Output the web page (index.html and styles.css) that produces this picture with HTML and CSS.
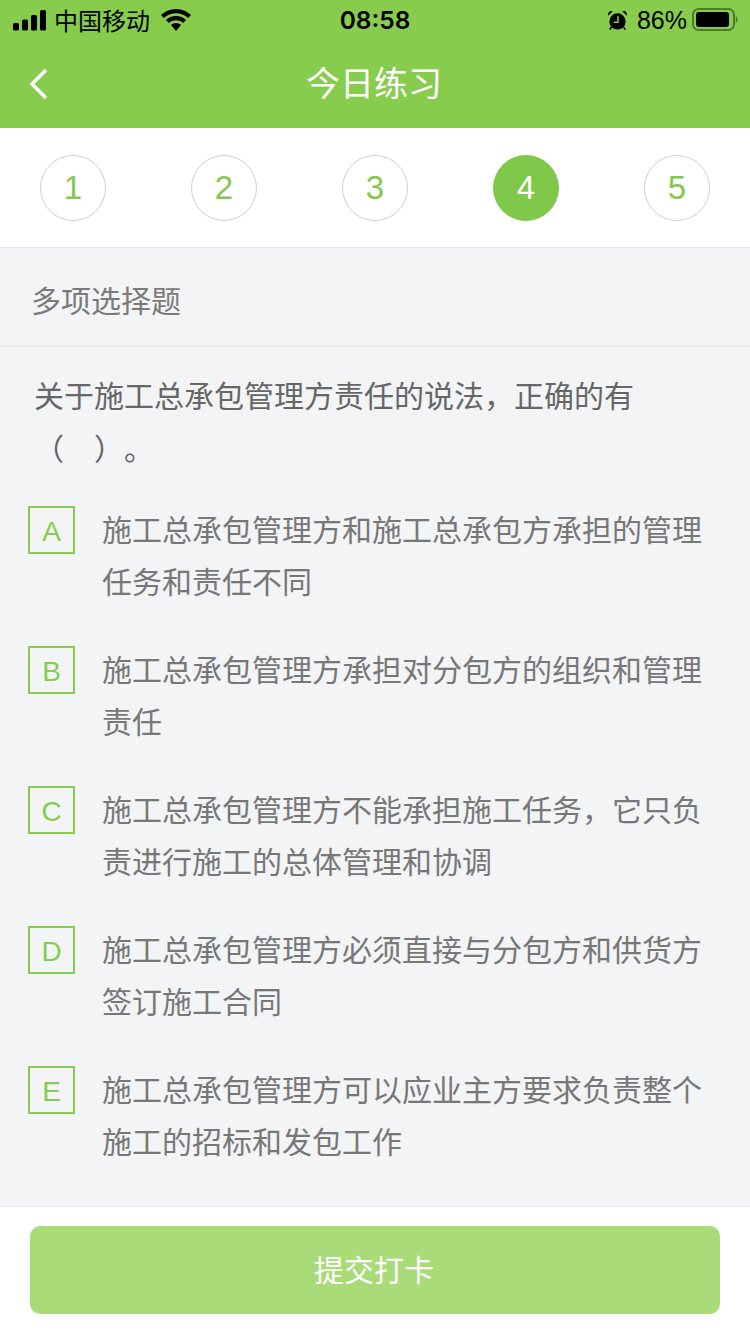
FILE: index.html
```html
<!DOCTYPE html>
<html lang="zh-CN">
<head>
<meta charset="utf-8">
<title>今日练习</title>
<link rel="stylesheet" href="styles.css">
</head>
<body>
<div class="page">
  <header class="top">
    <div class="status">
      <div class="status-left">
        <svg class="signal" width="33" height="21" viewBox="0 0 33 21"><rect x="0" y="13" width="6" height="7.500" rx="1.500"/><rect x="9" y="9.500" width="6" height="11" rx="1.500"/><rect x="18" y="5" width="6" height="15.500" rx="1.500"/><rect x="27" y="0" width="6" height="20.500" rx="1.500"/></svg>
        <span class="carrier">中国移动</span>
        <svg class="wifi" width="30" height="22" viewBox="0 0 30 22"><path d="M15 0C9.300 0 4.200 2.200 0 6L2.800 9C6.200 5.900 10.300 4.200 15 4.200S23.800 5.900 27.200 9L30 6C25.800 2.200 20.700 0 15 0Z"/><path d="M15 7C11.200 7 7.800 8.400 5 11L7.900 14.100C9.800 12.300 12.200 11.300 15 11.300S20.200 12.300 22.100 14.100L25 11C22.200 8.400 18.800 7 15 7Z"/><path d="M15 14C13 14 11.300 14.700 10 16L15 22L20 16C18.700 14.700 17 14 15 14Z"/></svg>
      </div>
      <span class="time">08:58</span>
      <div class="status-right">
        <svg class="alarm" width="21" height="21" viewBox="0 0 22 22"><circle cx="11" cy="12" r="8.500"/><path d="M1 6 6 1.500 3.500 1Q1 2 1 6ZM21 6 16 1.500 18.500 1Q21 2 21 6Z"/><path d="M4.500 18 3 20.500M17.500 18 19 20.500" stroke="#000" stroke-width="1.800" fill="none"/><path d="M11.500 6.500V12.800H7" stroke="#87cc4c" stroke-width="1.600" fill="none"/></svg>
        <span class="percent">86%</span>
        <svg class="battery" width="46" height="24" viewBox="0 0 46 24"><rect x="1" y="1" width="41" height="21" rx="5.500" fill="none" stroke="#4f7d2a" stroke-width="2"/><rect x="4" y="4" width="33" height="15" rx="3"/><path d="M44 8.500Q45.500 11.500 44 14.500" fill="none" stroke="#4f7d2a" stroke-width="1.500"/></svg>
      </div>
    </div>
    <nav class="nav">
      <svg class="back" width="24" height="34" viewBox="0 0 24 34"><path d="M19 3 5 17 19 31" fill="none" stroke="#fff" stroke-width="3.500"/></svg>
      <h1 class="title">今日练习</h1>
    </nav>
  </header>

  <div class="steps">
    <span class="step">1</span>
    <span class="step">2</span>
    <span class="step">3</span>
    <span class="step step-on">4</span>
    <span class="step">5</span>
  </div>

  <div class="kind">多项选择题</div>

  <main class="body">
    <p class="question">关于施工总承包管理方责任的说法，正确的有（　）。</p>
    <ul class="options">
      <li class="option"><span class="letter">A</span><span class="opt-text">施工总承包管理方和施工总承包方承担的管理任务和责任不同</span></li>
      <li class="option"><span class="letter">B</span><span class="opt-text">施工总承包管理方承担对分包方的组织和管理责任</span></li>
      <li class="option"><span class="letter">C</span><span class="opt-text">施工总承包管理方不能承担施工任务，它只负责进行施工的总体管理和协调</span></li>
      <li class="option"><span class="letter">D</span><span class="opt-text">施工总承包管理方必须直接与分包方和供货方签订施工合同</span></li>
      <li class="option"><span class="letter">E</span><span class="opt-text">施工总承包管理方可以应业主方要求负责整个施工的招标和发包工作</span></li>
    </ul>
  </main>

  <footer class="foot">
    <button class="submit" type="button"><span class="submit-label">提交打卡</span></button>
  </footer>
</div>
</body>
</html>
```

FILE: styles.css
```css
* { box-sizing: border-box; }
html, body { margin: 0; padding: 0; }
body {
  width: 750px;
  height: 1334px;
  overflow: hidden;
  background: #f2f4f6;
  font-family: "Noto Sans CJK SC", "Noto Sans", sans-serif;
  text-spacing-trim: space-all;
}
.page { display: flex; flex-direction: column; height: 1334px; }

.top { background: #87cc4c; height: 128px; flex: none; }
.status {
  height: 40px;
  padding: 0 12px 0 13px;
  display: flex;
  align-items: center;
  justify-content: space-between;
  position: relative;
  color: #000;
}
.status svg { fill: #000; display: block; }
.status-left, .status-right { display: flex; align-items: center; }
.carrier { font-size: 24px; line-height: 40px; margin-left: 8px; margin-top: -1px; }
.wifi { margin-left: 11px; }
.time {
  position: absolute;
  left: 0;
  right: 0;
  text-align: center;
  font-family: "Inter", "Liberation Sans", sans-serif;
  font-size: 24.500px;
  font-weight: 600;
  line-height: 40px;
}
.percent { font-family: "Liberation Sans", sans-serif; font-size: 25px; line-height: 40px; margin-left: 9px; }
.battery { margin-left: 5px; }

.nav { height: 88px; display: flex; align-items: flex-start; justify-content: center; position: relative; }
.back { position: absolute; left: 27px; top: 27px; }
.title { margin: 0 2px 0 0; font-size: 34px; font-weight: 400; color: #fff; line-height: 84px; }

.steps {
  flex: none;
  height: 120px;
  background: #fff;
  border-bottom: 1px solid #e6e8ea;
  padding: 0 40px;
  display: flex;
  align-items: center;
  justify-content: space-between;
}
.step {
  width: 66px;
  height: 66px;
  border: 1px solid #cfcfcf;
  border-radius: 50%;
  display: flex;
  align-items: center;
  justify-content: center;
  font-family: "Liberation Sans", sans-serif;
  font-size: 33px;
  color: #84c84f;
}
.step-on { background: #7fc84a; border-color: #7fc84a; color: #fff; }

.kind {
  flex: none;
  height: 99px;
  padding: 3px 0 0 31px;
  border-bottom: 1px solid #e6e8ea;
  display: flex;
  align-items: center;
  font-size: 30px;
  color: #7a7a7a;
}

.body { flex: 1; padding: 21px 34px 0 28px; }
.question { margin: 0 0 0 6px; width: 610px; font-size: 30px; line-height: 53px; color: #666; }
.options { list-style: none; margin: 28px 0 0; padding: 0; }
.option { display: flex; height: 140px; }
.letter {
  flex: none;
  width: 47px;
  height: 48px;
  margin-top: 4px;
  padding-top: 4px;
  border: 2px solid #87cc4c;
  display: flex;
  align-items: center;
  justify-content: center;
  font-family: "Liberation Sans", sans-serif;
  font-size: 28px;
  color: #87cc4c;
}
.opt-text { margin-left: 27px; width: 601px; font-size: 30px; line-height: 52px; color: #777; height: 104px; }

.foot {
  flex: none;
  height: 128px;
  background: #fff;
  border-top: 1px solid #e8eaee;
  padding: 19px 30px 0;
}
.submit {
  display: flex;
  align-items: center;
  justify-content: center;
  width: 690px;
  height: 88px;
  border: 0;
  border-radius: 10px;
  background: #a9db78;
  color: #fff;
  font-family: inherit;
  font-size: 30px;
  padding: 0 2px 4px 0;
}
```
